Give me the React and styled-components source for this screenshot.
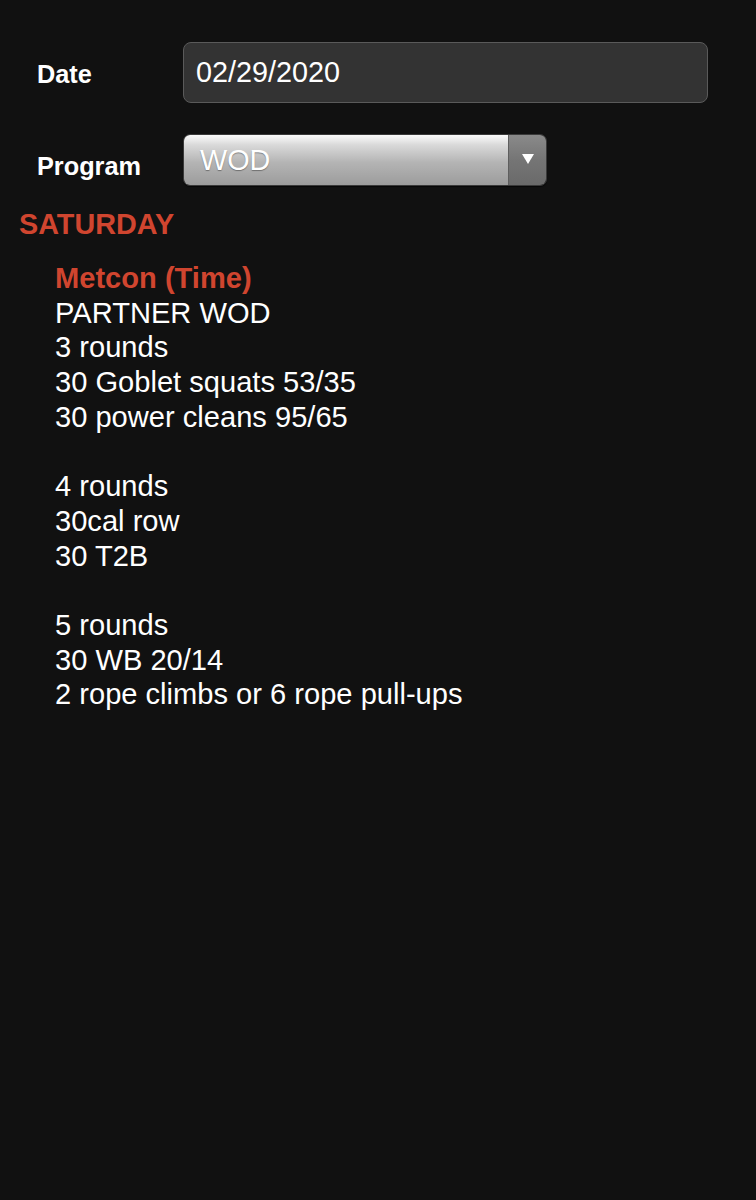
import React from "react";
import styled, { createGlobalStyle } from "styled-components";

const Global = createGlobalStyle`
  html, body { margin: 0; padding: 0; background: #111111; }
  body { font-family: "Liberation Sans", Arial, Helvetica, sans-serif; color: #ffffff; }
  #root { min-height: 1200px; background: #111111; }
`;

const Page = styled.div`
  padding: 42px 48px 0 19px;
`;

const Form = styled.div`
  display: grid;
  grid-template-columns: 164px 1fr;
  row-gap: 31px;
  align-items: center;
`;

const Label = styled.label`
  padding-left: 18px;
  font-size: 25.3px;
  font-weight: bold;
  color: #ffffff;
  margin-top: ${(p) => p.$shift || 0}px;
`;

const DateInput = styled.div`
  box-sizing: border-box;
  height: 61px;
  width: 525px;
  border: 1.5px solid #5a5a5a;
  border-radius: 8px;
  background: #333333;
  display: flex;
  align-items: center;
  padding-left: 12px;
  font-size: 28.8px;
  color: #ffffff;
`;

const Select = styled.div`
  box-sizing: border-box;
  height: 52px;
  width: 364px;
  border-radius: 7px;
  border: 1px solid #3a3a3a;
  display: flex;
  overflow: hidden;
  box-shadow: 0 1px 1px rgba(0, 0, 0, 0.6);
`;

const SelectValue = styled.div`
  flex: 1;
  display: flex;
  align-items: center;
  padding-left: 16px;
  font-size: 28.8px;
  color: #ffffff;
  text-shadow: 0 1px 1px rgba(0, 0, 0, 0.35);
  background: linear-gradient(to bottom, #fbfbfb 0%, #d9d9d9 20%, #b4b4b4 55%, #9c9c9c 100%);
`;

const SelectButton = styled.div`
  width: 37px;
  display: flex;
  align-items: center;
  justify-content: center;
  border-left: 1px solid #5e5e5e;
  background: linear-gradient(to bottom, #8a8a8a 0%, #757575 50%, #6a6a6a 100%);
`;

const Arrow = styled.div`
  width: 0;
  height: 0;
  border-left: 6px solid transparent;
  border-right: 6px solid transparent;
  border-top: 10px solid #ffffff;
  margin-top: -2px;
`;

const Day = styled.h2`
  margin: 22px 0 0 0;
  font-size: 28.8px;
  line-height: 32px;
  font-weight: bold;
  color: #d0452f;
`;

const Workout = styled.div`
  margin-top: 21px;
  padding-left: 36px;
  font-size: 29.1px;
  line-height: 34.7px;
`;

const Title = styled.div`
  font-weight: bold;
  color: #d0452f;
`;

const Line = styled.div`
  color: #ffffff;
  min-height: 34.7px;
`;

const lines = [
  "PARTNER WOD",
  "3 rounds",
  "30 Goblet squats 53/35",
  "30 power cleans 95/65",
  "",
  "4 rounds",
  "30cal row",
  "30 T2B",
  "",
  "5 rounds",
  "30 WB 20/14",
  "2 rope climbs or 6 rope pull-ups",
];

export default function App() {
  return (
    <>
      <Global />
      <Page>
        <Form>
          <Label $shift={3}>Date</Label>
          <DateInput>02/29/2020</DateInput>
          <Label $shift={12}>Program</Label>
          <Select>
            <SelectValue>WOD</SelectValue>
            <SelectButton>
              <Arrow />
            </SelectButton>
          </Select>
        </Form>
        <Day>SATURDAY</Day>
        <Workout>
          <Title>Metcon (Time)</Title>
          {lines.map((l, i) => (
            <Line key={i}>{l}</Line>
          ))}
        </Workout>
      </Page>
    </>
  );
}
